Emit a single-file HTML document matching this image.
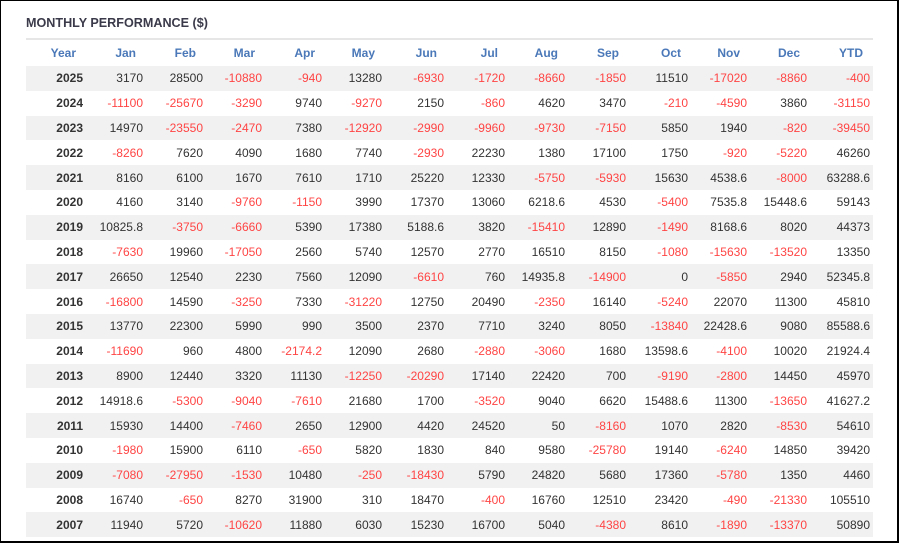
<!DOCTYPE html>
<html><head><meta charset="utf-8"><style>
html,body{margin:0;padding:0;background:#fff;}
body{width:900px;height:543px;position:relative;overflow:hidden;font-family:"Liberation Sans",Arial,sans-serif;}
.frame{position:absolute;left:0;top:0;width:896px;height:540px;border-left:1px solid #000;border-top:1px solid #000;border-right:2px solid #000;border-bottom:2px solid #000;}
h1{position:absolute;left:26px;top:16px;margin:0;font-size:12.6px;font-weight:bold;color:#3a3a4a;}
.line{position:absolute;left:26px;top:38px;width:847px;height:2px;background:#e6e6e6;}
table{position:absolute;left:26px;top:40px;border-collapse:collapse;table-layout:fixed;width:847px;font-size:12px;color:#333;}
th{height:26px;color:#4a78b8;font-weight:bold;text-align:right;padding:0 10px 0 0;}
td{height:24.8px;padding:0 3px 0 0;text-align:right;}
td:first-child{font-weight:bold;}
tbody tr:nth-child(odd){background:#f1f1f1;}
.r{color:#f44;}
</style></head><body>
<div class="frame"></div>
<h1>MONTHLY PERFORMANCE ($)</h1>
<div class="line"></div>
<table>
<colgroup><col style="width:60px"><col style="width:60px"><col style="width:60px"><col style="width:59px"><col style="width:60px"><col style="width:60px"><col style="width:62px"><col style="width:61px"><col style="width:60px"><col style="width:61px"><col style="width:62px"><col style="width:59px"><col style="width:60px"><col style="width:63px"></colgroup>
<thead><tr><th>Year</th><th>Jan</th><th>Feb</th><th>Mar</th><th>Apr</th><th>May</th><th>Jun</th><th>Jul</th><th>Aug</th><th>Sep</th><th>Oct</th><th>Nov</th><th>Dec</th><th>YTD</th></tr></thead>
<tbody>
<tr><td>2025</td><td>3170</td><td>28500</td><td class=r>-10880</td><td class=r>-940</td><td>13280</td><td class=r>-6930</td><td class=r>-1720</td><td class=r>-8660</td><td class=r>-1850</td><td>11510</td><td class=r>-17020</td><td class=r>-8860</td><td class=r>-400</td></tr>
<tr><td>2024</td><td class=r>-11100</td><td class=r>-25670</td><td class=r>-3290</td><td>9740</td><td class=r>-9270</td><td>2150</td><td class=r>-860</td><td>4620</td><td>3470</td><td class=r>-210</td><td class=r>-4590</td><td>3860</td><td class=r>-31150</td></tr>
<tr><td>2023</td><td>14970</td><td class=r>-23550</td><td class=r>-2470</td><td>7380</td><td class=r>-12920</td><td class=r>-2990</td><td class=r>-9960</td><td class=r>-9730</td><td class=r>-7150</td><td>5850</td><td>1940</td><td class=r>-820</td><td class=r>-39450</td></tr>
<tr><td>2022</td><td class=r>-8260</td><td>7620</td><td>4090</td><td>1680</td><td>7740</td><td class=r>-2930</td><td>22230</td><td>1380</td><td>17100</td><td>1750</td><td class=r>-920</td><td class=r>-5220</td><td>46260</td></tr>
<tr><td>2021</td><td>8160</td><td>6100</td><td>1670</td><td>7610</td><td>1710</td><td>25220</td><td>12330</td><td class=r>-5750</td><td class=r>-5930</td><td>15630</td><td>4538.6</td><td class=r>-8000</td><td>63288.6</td></tr>
<tr><td>2020</td><td>4160</td><td>3140</td><td class=r>-9760</td><td class=r>-1150</td><td>3990</td><td>17370</td><td>13060</td><td>6218.6</td><td>4530</td><td class=r>-5400</td><td>7535.8</td><td>15448.6</td><td>59143</td></tr>
<tr><td>2019</td><td>10825.8</td><td class=r>-3750</td><td class=r>-6660</td><td>5390</td><td>17380</td><td>5188.6</td><td>3820</td><td class=r>-15410</td><td>12890</td><td class=r>-1490</td><td>8168.6</td><td>8020</td><td>44373</td></tr>
<tr><td>2018</td><td class=r>-7630</td><td>19960</td><td class=r>-17050</td><td>2560</td><td>5740</td><td>12570</td><td>2770</td><td>16510</td><td>8150</td><td class=r>-1080</td><td class=r>-15630</td><td class=r>-13520</td><td>13350</td></tr>
<tr><td>2017</td><td>26650</td><td>12540</td><td>2230</td><td>7560</td><td>12090</td><td class=r>-6610</td><td>760</td><td>14935.8</td><td class=r>-14900</td><td>0</td><td class=r>-5850</td><td>2940</td><td>52345.8</td></tr>
<tr><td>2016</td><td class=r>-16800</td><td>14590</td><td class=r>-3250</td><td>7330</td><td class=r>-31220</td><td>12750</td><td>20490</td><td class=r>-2350</td><td>16140</td><td class=r>-5240</td><td>22070</td><td>11300</td><td>45810</td></tr>
<tr><td>2015</td><td>13770</td><td>22300</td><td>5990</td><td>990</td><td>3500</td><td>2370</td><td>7710</td><td>3240</td><td>8050</td><td class=r>-13840</td><td>22428.6</td><td>9080</td><td>85588.6</td></tr>
<tr><td>2014</td><td class=r>-11690</td><td>960</td><td>4800</td><td class=r>-2174.2</td><td>12090</td><td>2680</td><td class=r>-2880</td><td class=r>-3060</td><td>1680</td><td>13598.6</td><td class=r>-4100</td><td>10020</td><td>21924.4</td></tr>
<tr><td>2013</td><td>8900</td><td>12440</td><td>3320</td><td>11130</td><td class=r>-12250</td><td class=r>-20290</td><td>17140</td><td>22420</td><td>700</td><td class=r>-9190</td><td class=r>-2800</td><td>14450</td><td>45970</td></tr>
<tr><td>2012</td><td>14918.6</td><td class=r>-5300</td><td class=r>-9040</td><td class=r>-7610</td><td>21680</td><td>1700</td><td class=r>-3520</td><td>9040</td><td>6620</td><td>15488.6</td><td>11300</td><td class=r>-13650</td><td>41627.2</td></tr>
<tr><td>2011</td><td>15930</td><td>14400</td><td class=r>-7460</td><td>2650</td><td>12900</td><td>4420</td><td>24520</td><td>50</td><td class=r>-8160</td><td>1070</td><td>2820</td><td class=r>-8530</td><td>54610</td></tr>
<tr><td>2010</td><td class=r>-1980</td><td>15900</td><td>6110</td><td class=r>-650</td><td>5820</td><td>1830</td><td>840</td><td>9580</td><td class=r>-25780</td><td>19140</td><td class=r>-6240</td><td>14850</td><td>39420</td></tr>
<tr><td>2009</td><td class=r>-7080</td><td class=r>-27950</td><td class=r>-1530</td><td>10480</td><td class=r>-250</td><td class=r>-18430</td><td>5790</td><td>24820</td><td>5680</td><td>17360</td><td class=r>-5780</td><td>1350</td><td>4460</td></tr>
<tr><td>2008</td><td>16740</td><td class=r>-650</td><td>8270</td><td>31900</td><td>310</td><td>18470</td><td class=r>-400</td><td>16760</td><td>12510</td><td>23420</td><td class=r>-490</td><td class=r>-21330</td><td>105510</td></tr>
<tr><td>2007</td><td>11940</td><td>5720</td><td class=r>-10620</td><td>11880</td><td>6030</td><td>15230</td><td>16700</td><td>5040</td><td class=r>-4380</td><td>8610</td><td class=r>-1890</td><td class=r>-13370</td><td>50890</td></tr>
</tbody></table>
</body></html>
